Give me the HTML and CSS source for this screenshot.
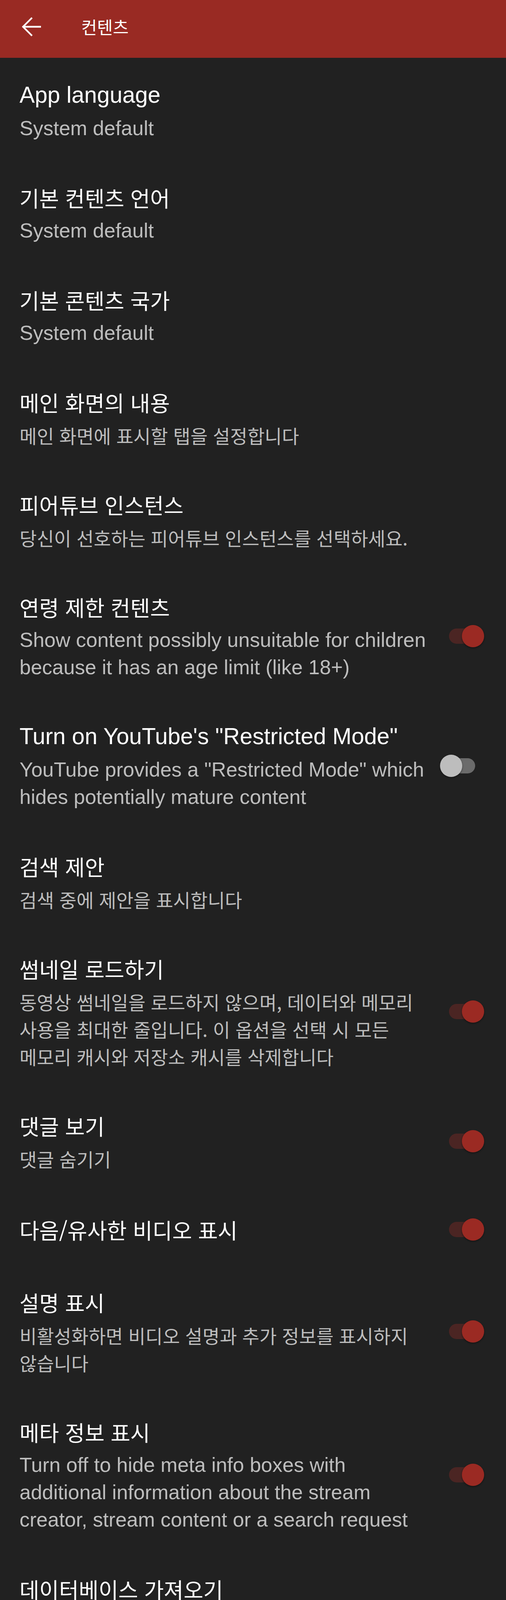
FILE: index.html
```html
<!DOCTYPE html>
<html lang="ko">
<head>
<meta charset="utf-8">
<title>컨텐츠</title>
<link rel="stylesheet" href="styles.css">
</head>
<body>
<header class="toolbar">
  <button class="back" aria-label="뒤로">
    <svg viewBox="0 0 24 24" width="67" height="67" aria-hidden="true">
      <path d="M20 12H4.6M12 4.3L4.3 12l7.7 7.7" fill="none" stroke="#fff" stroke-width="1.55" stroke-linecap="square"/>
    </svg>
  </button>
  <h1 class="toolbar-title ko">컨텐츠</h1>
</header>

<main>
  <section class="prefs">
    <div class="pref">
      <div class="pref-text">
        <div class="pref-title">App language</div>
        <div class="pref-summary">System default</div>
      </div>
    </div>
    <div class="pref">
      <div class="pref-text">
        <div class="pref-title ko">기본 컨텐츠 언어</div>
        <div class="pref-summary">System default</div>
      </div>
    </div>
    <div class="pref">
      <div class="pref-text">
        <div class="pref-title ko">기본 콘텐츠 국가</div>
        <div class="pref-summary">System default</div>
      </div>
    </div>
    <div class="pref">
      <div class="pref-text">
        <div class="pref-title ko">메인 화면의 내용</div>
        <div class="pref-summary ko">메인 화면에 표시할 탭을 설정합니다</div>
      </div>
    </div>
    <div class="pref">
      <div class="pref-text">
        <div class="pref-title ko">피어튜브 인스턴스</div>
        <div class="pref-summary ko">당신이 선호하는 피어튜브 인스턴스를 선택하세요.</div>
      </div>
    </div>
    <div class="pref">
      <div class="pref-text">
        <div class="pref-title ko">연령 제한 컨텐츠</div>
        <div class="pref-summary">Show content possibly unsuitable for children because it has an age limit (like 18+)</div>
      </div>
      <span class="switch on"><span class="track"></span><span class="thumb"></span></span>
    </div>
    <div class="pref">
      <div class="pref-text">
        <div class="pref-title">Turn on YouTube's "Restricted Mode"</div>
        <div class="pref-summary">YouTube provides a "Restricted Mode" which hides potentially mature content</div>
      </div>
      <span class="switch"><span class="track"></span><span class="thumb"></span></span>
    </div>
    <div class="pref">
      <div class="pref-text">
        <div class="pref-title ko">검색 제안</div>
        <div class="pref-summary ko">검색 중에 제안을 표시합니다</div>
      </div>
    </div>
    <div class="pref">
      <div class="pref-text">
        <div class="pref-title ko">썸네일 로드하기</div>
        <div class="pref-summary ko">동영상 썸네일을 로드하지 않으며, 데이터와 메모리 사용을 최대한 줄입니다. 이 옵션을 선택 시 모든 메모리 캐시와 저장소 캐시를 삭제합니다</div>
      </div>
      <span class="switch on"><span class="track"></span><span class="thumb"></span></span>
    </div>
    <div class="pref">
      <div class="pref-text">
        <div class="pref-title ko">댓글 보기</div>
        <div class="pref-summary ko">댓글 숨기기</div>
      </div>
      <span class="switch on"><span class="track"></span><span class="thumb"></span></span>
    </div>
    <div class="pref single">
      <div class="pref-text">
        <div class="pref-title ko">다음/유사한 비디오 표시</div>
      </div>
      <span class="switch on"><span class="track"></span><span class="thumb"></span></span>
    </div>
    <div class="pref">
      <div class="pref-text">
        <div class="pref-title ko">설명 표시</div>
        <div class="pref-summary ko">비활성화하면 비디오 설명과 추가 정보를 표시하지 않습니다</div>
      </div>
      <span class="switch on"><span class="track"></span><span class="thumb"></span></span>
    </div>
    <div class="pref">
      <div class="pref-text">
        <div class="pref-title ko">메타 정보 표시</div>
        <div class="pref-summary">Turn off to hide meta info boxes with additional information about the stream creator, stream content or a search request</div>
      </div>
      <span class="switch on"><span class="track"></span><span class="thumb"></span></span>
    </div>
    <div class="pref">
      <div class="pref-text">
        <div class="pref-title ko">데이터베이스 가져오기</div>
        <div class="pref-summary ko">현재 시청 기록 및 구독 목록을 덮어쓰기 합니다</div>
      </div>
    </div>
    <div class="pref">
      <div class="pref-text">
        <div class="pref-title ko">데이터베이스 내보내기</div>
        <div class="pref-summary ko">시청 기록, 구독 목록과 재생목록을 내보냅니다</div>
      </div>
    </div>
  </section>

  <div class="category-gap"></div>

  <section class="prefs">
    <h2 class="category ko">피드</h2>
    <div class="pref">
      <div class="pref-text">
        <div class="pref-title">Feed update threshold</div>
        <div class="pref-summary">Time after last update before a subscription is considered outdated — 5 분</div>
      </div>
    </div>
    <div class="pref last">
      <div class="pref-text">
        <div class="pref-title">Fetch from dedicated feed when available</div>
        <div class="pref-summary">Available in some services, it is usually much faster but may return a limited amount of items and often incomplete information (e.g. no duration, item type, no live status)</div>
      </div>
      <span class="switch"><span class="track"></span><span class="thumb"></span></span>
    </div>
  </section>
</main>
</body>
</html>
```

FILE: styles.css
```css
html, body {
  margin: 0;
  padding: 0;
  background: #212121;
}

body {
  font-family: "Liberation Sans", "Noto Sans CJK KR", sans-serif;
  color: #ffffff;
}

.toolbar {
  box-sizing: border-box;
  height: 148px;
  padding: 0 0 12px 47px;
  background: #992a23;
  display: flex;
  align-items: center;
}

.back {
  flex: none;
  width: 67px;
  height: 67px;
  padding: 0;
  margin: 0;
  border: 0;
  background: none;
  display: flex;
}

.toolbar-title {
  margin: 0 0 0 94px;
  font-size: 44px;
  font-weight: 400;
  line-height: normal;
  color: #ffffff;
}

.ko {
  font-family: "Noto Sans CJK KR", "Liberation Sans", sans-serif;
  word-break: keep-all;
}

.prefs {
  display: flex;
  flex-direction: column;
}

.pref {
  display: flex;
  align-items: center;
  padding: 55px 56px 47px 50px;
}

.pref.single {
  padding-top: 59px;
  padding-bottom: 51px;
}

.pref.last {
  padding-bottom: 40px;
}

.pref-text {
  flex: 1;
  min-width: 0;
}

.pref-title {
  font-size: 58.5px;
  line-height: 80px;
  color: #ffffff;
}

.pref-title.ko {
  font-size: 55px;
}

.pref-summary {
  margin-top: 10px;
  font-size: 52px;
  line-height: 70px;
  color: #bdbdbd;
}

.pref-summary.ko {
  font-size: 48px;
}

.switch {
  flex: none;
  position: relative;
  width: 113px;
  height: 57px;
  margin-left: 20px;
}

.track {
  position: absolute;
  left: 23px;
  top: 9px;
  width: 67px;
  height: 39px;
  border-radius: 20px;
  background: #6b6b6b;
}

.thumb {
  position: absolute;
  left: 0;
  top: 0;
  width: 57px;
  height: 57px;
  border-radius: 50%;
  background: #bdbdbd;
  box-shadow: 0 2px 4px rgba(0, 0, 0, 0.45);
}

.switch.on .track {
  background: #4b2523;
}

.switch.on .thumb {
  left: 56px;
  background: #9b2a23;
}

.category-gap {
  height: 43px;
  margin-top: 6px;
  background: linear-gradient(to bottom, #1a1a1a 0, #1b1b1b 4px, #2a2a2a 14px, #2b2b2b 100%);
}

.category {
  margin: 0;
  padding: 55px 50px 9px;
  font-size: 43px;
  font-weight: 700;
  line-height: 60px;
  color: #ffffff;
}
```
